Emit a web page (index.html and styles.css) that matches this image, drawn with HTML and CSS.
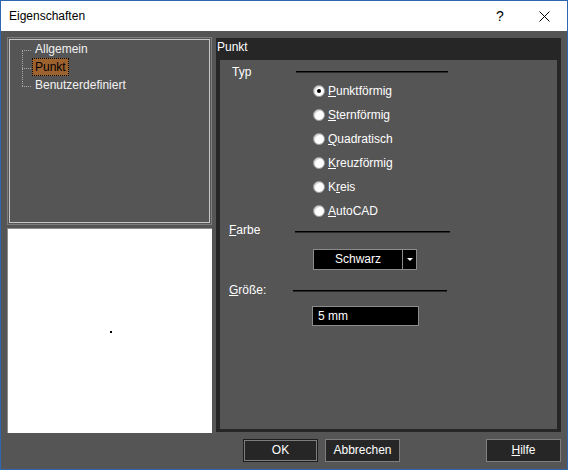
FILE: index.html
```html
<!DOCTYPE html>
<html lang="de">
<head>
    <meta charset="UTF-8">
    <title>Eigenschaften</title>
    <link rel="stylesheet" href="styles.css">
</head>
<body>
    <div class="window">
        <div class="titlebar">
            <div class="title">Eigenschaften</div>
            <div class="tb-btn tb-help">?</div>
            <div class="tb-btn tb-close">
                <svg width="11" height="11" viewBox="0 0 11 11">
                    <path d="M0.5 0.5 L10.5 10.5 M10.5 0.5 L0.5 10.5" stroke="#000" stroke-width="1" fill="none"/>
                </svg>
            </div>
        </div>

        <div class="content">
            <div class="main">
                <!-- linke Spalte: Baum + Vorschau -->
                <div class="side">
                    <div class="tree">
                        <div class="tree-inner">
                            <ul class="tree-list">
                                <li>Allgemein</li>
                                <li><span class="tree-sel">Punkt</span></li>
                                <li>Benutzerdefiniert</li>
                            </ul>
                        </div>
                    </div>
                    <div class="preview">
                        <div class="preview-dot"></div>
                    </div>
                </div>

                <!-- rechte Seite: Eigenschaftsseite -->
                <div class="panel">
                    <div class="panel-title">Punkt</div>
                    <div class="page">
                        <div class="group-head group-head--typ">
                            <span class="group-label">Typ</span>
                            <span class="group-line"></span>
                        </div>
                        <div class="radios">
                            <div class="radio checked"><span class="radio-dot"></span><span><u>P</u>unktförmig</span></div>
                            <div class="radio"><span class="radio-dot"></span><span><u>S</u>ternförmig</span></div>
                            <div class="radio"><span class="radio-dot"></span><span><u>Q</u>uadratisch</span></div>
                            <div class="radio"><span class="radio-dot"></span><span><u>K</u>reuzförmig</span></div>
                            <div class="radio"><span class="radio-dot"></span><span>K<u>r</u>eis</span></div>
                            <div class="radio"><span class="radio-dot"></span><span><u>A</u>utoCAD</span></div>
                        </div>

                        <div class="group-head group-head--farbe">
                            <span class="group-label"><u>F</u>arbe</span>
                            <span class="group-line"></span>
                        </div>
                        <div class="combo">
                            <div class="combo-value">Schwarz</div>
                            <div class="combo-btn"><span class="combo-arrow"></span></div>
                        </div>

                        <div class="group-head group-head--groesse">
                            <span class="group-label"><u>G</u>röße:</span>
                            <span class="group-line"></span>
                        </div>
                        <div class="field">5 mm</div>
                    </div>
                </div>
            </div>

            <div class="buttons">
                <div class="btn btn--default">OK</div>
                <div class="btn">Abbrechen</div>
                <div class="btn btn--help"><u>H</u>ilfe</div>
            </div>
        </div>
    </div>
</body>
</html>
```

FILE: styles.css
```css
* {
    box-sizing: border-box;
}

body {
    margin: 0;
    padding: 0;
    background-color: #555555;
    font-family: 'Liberation Sans', Arial, sans-serif;
    font-size: 12px;
}

.window {
    width: 568px;
    height: 470px;
    border: 1px solid #2f66b3;
    background-color: #555555;
    display: flex;
    flex-direction: column;
}

/* Titelleiste */
.titlebar {
    height: 30px;
    background-color: #ffffff;
    display: flex;
    align-items: center;
    color: #000000;
}

.title {
    flex: 1;
    padding-left: 8px;
    font-size: 12px;
}

.tb-btn {
    width: 46px;
    height: 30px;
    display: flex;
    align-items: center;
    justify-content: center;
}

.tb-help {
    font-size: 14px;
    padding-left: 4px;
}

/* Inhalt */
.content {
    flex: 1;
    display: flex;
    flex-direction: column;
    padding: 6px 0 0 6px;
}

.main {
    display: flex;
    gap: 4px;
}

.side {
    width: 205px;
    display: flex;
    flex-direction: column;
    gap: 3px;
}

.tree {
    height: 188px;
    border: 1px solid #7d7d7d;
    padding: 1px;
}

.tree-inner {
    height: 100%;
    border: 1px solid #c6c6c6;
}

.tree-list {
    list-style: none;
    margin: 0;
    padding: 0;
    position: relative;
    color: #f2f2f2;
}

.tree-list::before {
    content: '';
    position: absolute;
    left: 12px;
    top: 10px;
    bottom: 8px;
    border-left: 1px dotted #a8a8a8;
}

.tree-list li {
    position: relative;
    height: 18px;
    line-height: 18px;
    padding-left: 25px;
}

.tree-list li::before {
    content: '';
    position: absolute;
    left: 12px;
    top: 10px;
    width: 9px;
    border-top: 1px dotted #a8a8a8;
}

.tree-list li:has(.tree-sel) {
    padding-left: 22px;
}

.tree-sel {
    display: inline-block;
    height: 18px;
    line-height: 16px;
    padding: 0 2px;
    border: 1px dotted #000000;
    background-color: #9c6230;
    color: #000000;
}

.preview {
    height: 205px;
    background-color: #ffffff;
    border-top: 1px solid #8c8c8c;
    border-left: 1px solid #8c8c8c;
    display: flex;
    align-items: center;
    justify-content: center;
}

.preview-dot {
    width: 2px;
    height: 2px;
    background-color: #000000;
    margin: 2px 0 0 2px;
}

/* rechte Seite */
.panel {
    width: 345px;
    height: 394px;
    margin-top: 1px;
    background-color: #262626;
    padding: 0 4px 3px 4px;
    display: flex;
    flex-direction: column;
}

.panel-title {
    height: 22px;
    line-height: 18px;
    padding-left: 0;
    margin-left: -3px;
    color: #ffffff;
}

.page {
    flex: 1;
    background-color: #555555;
    padding-top: 4px;
    color: #ffffff;
}

.group-head {
    display: flex;
    align-items: center;
    height: 16px;
}

.group-label {
    line-height: 16px;
}

.group-line {
    height: 2px;
    margin-top: 2px;
    border-top: 1px solid #000000;
    border-bottom: 1px solid #2a2a2a;
}

.group-head--typ {
    padding-left: 12px;
}

.group-head--typ .group-label {
    width: 64px;
}

.group-head--typ .group-line {
    width: 152px;
    margin-top: -1px;
}

.group-head--farbe {
    margin-top: 3px;
    padding-left: 9px;
}

.group-head--farbe .group-label {
    width: 66px;
}

.group-head--farbe .group-line {
    width: 155px;
    margin-top: 3px;
}

.group-head--groesse {
    margin-top: 12px;
    padding-left: 9px;
}

.group-head--groesse .group-label {
    width: 64px;
}

.group-head--groesse .group-line {
    width: 154px;
}

/* Optionsfelder */
.radios {
    display: flex;
    flex-direction: column;
    gap: 8px;
    margin-top: 3px;
    padding-left: 93px;
}

.radio {
    display: flex;
    align-items: center;
    gap: 3px;
    height: 16px;
}

.radio-dot {
    width: 12px;
    height: 12px;
    border-radius: 50%;
    background-color: #ffffff;
    border: 1px solid #9a9a9a;
    box-shadow: inset 1px 1px 0 #d8d8d8;
    display: flex;
    align-items: center;
    justify-content: center;
}

.radio.checked .radio-dot::after {
    content: '';
    width: 4px;
    height: 4px;
    border-radius: 50%;
    background-color: #000000;
}

/* Farbauswahl */
.combo {
    display: flex;
    margin-top: 11px;
    margin-left: 93px;
    height: 21px;
}

.combo-value {
    width: 90px;
    background-color: #000000;
    border: 1px solid #8c8c8c;
    text-align: center;
    line-height: 19px;
}

.combo-btn {
    width: 14px;
    background-color: #000000;
    border: 1px solid #8c8c8c;
    border-left: none;
    display: flex;
    align-items: center;
    justify-content: center;
}

.combo-arrow {
    width: 0;
    height: 0;
    border-left: 3px solid transparent;
    border-right: 3px solid transparent;
    border-top: 3px solid #ffffff;
}

.field {
    margin-top: 8px;
    margin-left: 92px;
    width: 107px;
    height: 20px;
    line-height: 18px;
    padding-left: 5px;
    background-color: #000000;
    border: 1px solid #8c8c8c;
}

/* Schaltflächen */
.buttons {
    display: flex;
    gap: 7px;
    margin-top: 6px;
    padding-left: 236px;
    padding-right: 6px;
}

.btn {
    width: 75px;
    height: 23px;
    line-height: 21px;
    text-align: center;
    color: #ffffff;
    background-color: #262626;
    border: 1px solid #7e7e7e;
}

.btn--default {
    border-color: #1c1c1c;
    box-shadow: inset 0 0 0 1px #7e7e7e;
}

.btn--help {
    margin-left: auto;
}
```
